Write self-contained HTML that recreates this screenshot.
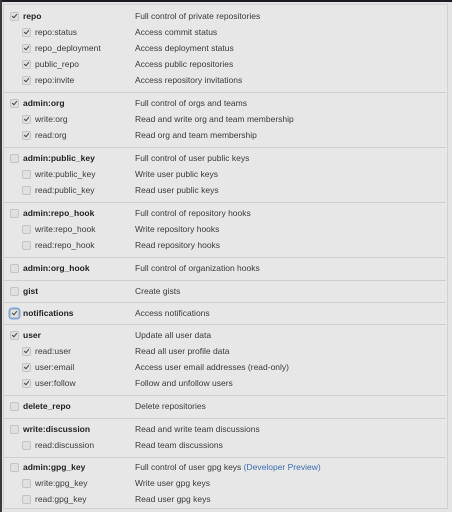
<!DOCTYPE html>
<html><head><meta charset="utf-8"><style>
html,body{margin:0;padding:0;}
body{width:452px;height:512px;background:#e4e4e4;position:relative;overflow:hidden;font-family:"Liberation Sans",sans-serif;font-size:8.5px;color:#3a3a3a;}
.top{position:absolute;left:0;top:0;width:452px;height:2px;background:#1c1c22;}
.left{position:absolute;left:0;top:0;width:2px;height:512px;background:#3a3a3e;}
.panel{position:absolute;left:3px;top:4px;width:443px;height:503px;border:1px solid #d2d2d2;background:#e7e7e7;}
.r{position:absolute;height:12px;line-height:12px;white-space:nowrap;}
.cb{position:absolute;width:7px;height:7px;border:1px solid #c4c4c4;border-radius:2px;background:#e0e0e0;}
.cb.c::after{content:"";position:absolute;left:2px;top:0px;width:2px;height:4px;border:solid #444;border-width:0 1.3px 1.3px 0;transform:rotate(40deg);}
.cb.f{box-shadow:0 0 0 1.5px #7aa7e0;}
.n{position:absolute;}
.b{font-weight:bold;color:#222;}
.d{position:absolute;left:135px;}
.sep{position:absolute;left:4px;width:442px;height:1px;background:#cfcfcf;}
a{color:#3a6db0;text-decoration:none;}
</style></head><body>
<div class="top"></div><div class="left"></div>
<div class="panel"></div>
<div id="c"></div>
<script>
var rows=[
[16,0,1,'repo','Full control of private repositories'],
[32,1,1,'repo:status','Access commit status'],
[48,1,1,'repo_deployment','Access deployment status'],
[64,1,1,'public_repo','Access public repositories'],
[80,1,1,'repo:invite','Access repository invitations'],
['s',92],
[103,0,1,'admin:org','Full control of orgs and teams'],
[119,1,1,'write:org','Read and write org and team membership'],
[135,1,1,'read:org','Read org and team membership'],
['s',147],
[158,0,0,'admin:public_key','Full control of user public keys'],
[174,1,0,'write:public_key','Write user public keys'],
[190,1,0,'read:public_key','Read user public keys'],
['s',202],
[213,0,0,'admin:repo_hook','Full control of repository hooks'],
[229,1,0,'write:repo_hook','Write repository hooks'],
[245,1,0,'read:repo_hook','Read repository hooks'],
['s',257],
[268,0,0,'admin:org_hook','Full control of organization hooks'],
['s',280],
[291,0,0,'gist','Create gists'],
['s',302],
[313,0,2,'notifications','Access notifications'],
['s',324],
[335,0,1,'user','Update all user data'],
[351,1,1,'read:user','Read all user profile data'],
[367,1,1,'user:email','Access user email addresses (read-only)'],
[383,1,1,'user:follow','Follow and unfollow users'],
['s',395],
[406,0,0,'delete_repo','Delete repositories'],
['s',418],
[429,0,0,'write:discussion','Read and write team discussions'],
[445,1,0,'read:discussion','Read team discussions'],
['s',457],
[467,0,0,'admin:gpg_key','Full control of user gpg keys <a>(Developer Preview)</a>'],
[483,1,0,'write:gpg_key','Write user gpg keys'],
[499,1,0,'read:gpg_key','Read user gpg keys']
];
var h='';
rows.forEach(function(r){
 if(r[0]==='s'){h+='<div class="sep" style="top:'+r[1]+'px"></div>';return;}
 var y=r[0],ch=r[1],st=r[2];
 var cx=ch?22:10, nx=ch?35:23;
 var cls='cb'+(st?' c':'')+(st==2?' f':'');
 h+='<div class="'+cls+'" style="left:'+cx+'px;top:'+(y-4)+'px"></div>';
 h+='<div class="r n'+(ch?'':' b')+'" style="left:'+nx+'px;top:'+(y-6)+'px">'+r[3]+'</div>';
 h+='<div class="r d" style="top:'+(y-6)+'px">'+r[4]+'</div>';
});
document.getElementById('c').innerHTML=h;
</script>
</body></html>
